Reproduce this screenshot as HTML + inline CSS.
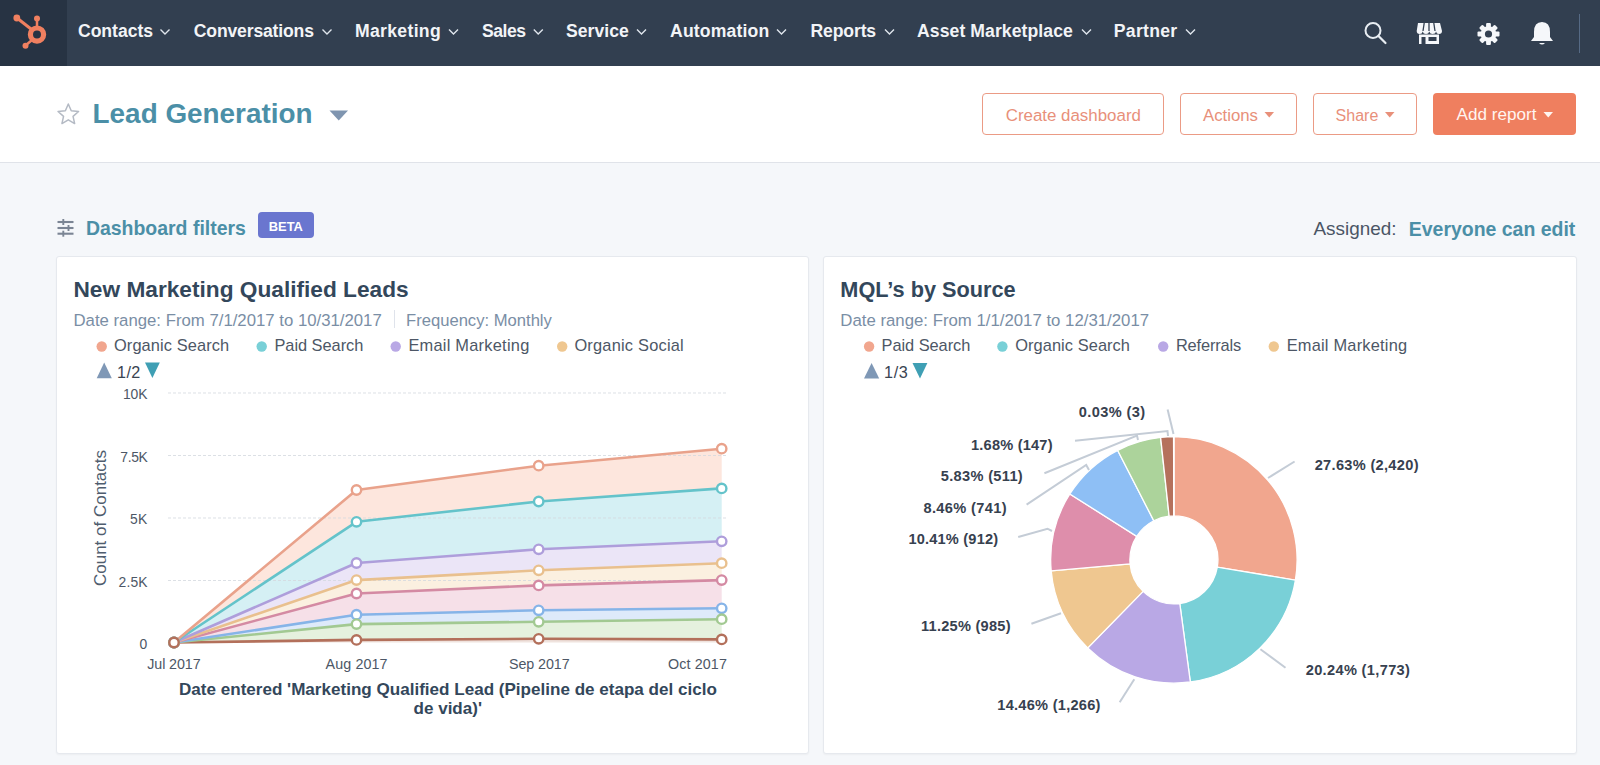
<!DOCTYPE html>
<html><head><meta charset="utf-8">
<style>
html,body{margin:0;padding:0;}
body{width:1600px;height:765px;overflow:hidden;position:relative;background:#f5f7fa;font-family:"Liberation Sans",sans-serif;}
.t{position:absolute;white-space:nowrap;line-height:normal;}
.abs{position:absolute;}
#nav{position:absolute;left:0;top:0;width:1600px;height:66px;background:#323f50;}
#logo{position:absolute;left:0;top:0;width:67px;height:66px;background:#273343;}
#hdr{position:absolute;left:0;top:66px;width:1600px;height:96px;background:#fff;border-bottom:1px solid #e0e3e9;}
.btn{position:absolute;top:93px;height:42px;border:1.5px solid #eb9b85;border-radius:4px;background:#fff;box-sizing:border-box;}
.card{position:absolute;top:256px;height:498px;background:#fff;border:1px solid #e6e9ee;border-radius:3px;box-sizing:border-box;box-shadow:0 1px 2px rgba(0,0,0,0.04);}
svg{position:absolute;left:0;top:0;}
</style></head><body>
<div id="nav"><div id="logo"></div></div>
<div id="hdr"></div>
<div class="btn" style="left:982px;width:182px;"></div>
<div class="btn" style="left:1180px;width:117px;"></div>
<div class="btn" style="left:1313px;width:104px;"></div>
<div class="abs" style="left:1433px;top:93px;width:143px;height:42px;background:#ef7f5f;border-radius:4px;"></div>
<div class="abs" style="left:258px;top:212px;width:56px;height:26px;background:#6a76cf;border-radius:4px;"></div>
<div class="card" style="left:56px;width:753px;"></div>
<div class="card" style="left:823px;width:754px;"></div>
<svg width="1600" height="765" viewBox="0 0 1600 765">
<!-- logo -->
<g fill="#f08060" stroke="#f08060">
<circle cx="37" cy="34.6" r="6.6" fill="none" stroke-width="5.2"/>
<line x1="37" y1="26" x2="37" y2="19" stroke-width="2.5"/>
<circle cx="37" cy="18.5" r="3" stroke="none"/>
<line x1="31" y1="29" x2="17" y2="18" stroke-width="3"/>
<circle cx="16.8" cy="18" r="3.4" stroke="none"/>
<line x1="32" y1="40" x2="25.5" y2="45.5" stroke-width="2.5"/>
<circle cx="25.5" cy="45.7" r="3" stroke="none"/>
</g>
<path d="M160.5 29.5 L165.0 34 L169.5 29.5" fill="none" stroke="#dfe5ec" stroke-width="1.4"/><path d="M322.5 29.5 L327.0 34 L331.5 29.5" fill="none" stroke="#dfe5ec" stroke-width="1.4"/><path d="M449.0 29.5 L453.5 34 L458.0 29.5" fill="none" stroke="#dfe5ec" stroke-width="1.4"/><path d="M533.8 29.5 L538.2 34 L542.8 29.5" fill="none" stroke="#dfe5ec" stroke-width="1.4"/><path d="M637.0 29.5 L641.5 34 L646.0 29.5" fill="none" stroke="#dfe5ec" stroke-width="1.4"/><path d="M777.0 29.5 L781.5 34 L786.0 29.5" fill="none" stroke="#dfe5ec" stroke-width="1.4"/><path d="M885.0 29.5 L889.5 34 L894.0 29.5" fill="none" stroke="#dfe5ec" stroke-width="1.4"/><path d="M1082.0 29.5 L1086.5 34 L1091.0 29.5" fill="none" stroke="#dfe5ec" stroke-width="1.4"/><path d="M1186.0 29.5 L1190.5 34 L1195.0 29.5" fill="none" stroke="#dfe5ec" stroke-width="1.4"/>
<!-- search -->
<circle cx="1373" cy="30.5" r="7.5" fill="none" stroke="#e8edf2" stroke-width="2"/>
<line x1="1378.5" y1="36" x2="1385.5" y2="43" stroke="#e8edf2" stroke-width="2.2" stroke-linecap="round"/>
<!-- store -->
<g fill="#f5f7fa">
<path d="M1418 23 h22 l2 8 q0 3 -3 3 q-2.5 0 -3 -2.5 q-0.5 2.5 -3.5 2.5 q-2.5 0 -3.2 -2.5 q-0.7 2.5 -3.3 2.5 q-2.8 0 -3.3 -2.5 q-0.5 2.5 -3 2.5 q-3 0 -3 -3 z"/>
<rect x="1419" y="34.5" width="20" height="9.5"/>
</g>
<g stroke="#323f50" stroke-width="1.3"><line x1="1424.2" y1="23" x2="1423" y2="31"/><line x1="1429" y1="23" x2="1429" y2="31"/><line x1="1433.8" y1="23" x2="1435" y2="31"/></g>
<rect x="1421.5" y="37" width="4" height="7" fill="#323f50"/>
<rect x="1428.5" y="37" width="8" height="4" fill="#323f50"/>
<!-- gear -->
<g transform="translate(1488.5 34)">
<circle r="7.8" fill="#f5f7fa"/>
<g fill="#f5f7fa">
<rect x="-2.4" y="-11" width="4.8" height="22" rx="1"/>
<rect x="-2.4" y="-11" width="4.8" height="22" rx="1" transform="rotate(45)"/>
<rect x="-2.4" y="-11" width="4.8" height="22" rx="1" transform="rotate(90)"/>
<rect x="-2.4" y="-11" width="4.8" height="22" rx="1" transform="rotate(135)"/>
</g>
<circle r="3.6" fill="#323f50"/>
</g>
<!-- bell -->
<path d="M1542 22 q-8 0 -8 10 v5 l-3 4 h22 l-3 -4 v-5 q0 -10 -8 -10 z" fill="#f5f7fa"/>
<path d="M1539 43 q3 3 6 0 z" fill="#f5f7fa"/>
<line x1="1579.5" y1="14" x2="1579.5" y2="53" stroke="#566a85" stroke-width="1"/>
<!-- star -->
<path d="M68.30 104.00 L71.24 110.75 L78.57 111.46 L73.06 116.35 L74.65 123.54 L68.30 119.80 L61.95 123.54 L63.54 116.35 L58.03 111.46 L65.36 110.75 Z" fill="none" stroke="#b4bac4" stroke-width="1.5" stroke-linejoin="round"/>
<!-- title caret -->
<path d="M329.5 110.5 L348 110.5 L338.75 120.5 Z" fill="#7f95b0"/>
<!-- btn carets -->
<path d="M1264.5 112 L1274 112 L1269.25 117.5 Z" fill="#e8907a"/>
<path d="M1385 112 L1394.5 112 L1389.75 117.5 Z" fill="#e8907a"/>
<path d="M1543.5 112 L1553 112 L1548.25 117.5 Z" fill="#fff5f0"/>
<!-- filter icon -->
<g stroke="#7b8594" stroke-width="2.1">
<line x1="57.5" y1="222" x2="73.5" y2="222"/><line x1="57.5" y1="228" x2="73.5" y2="228"/><line x1="57.5" y1="233.7" x2="73.5" y2="233.7"/>
</g>
<g stroke="#7b8594" stroke-width="1.9">
<line x1="63.3" y1="219" x2="63.3" y2="225"/><line x1="68.5" y1="225" x2="68.5" y2="231"/><line x1="63.3" y1="230.7" x2="63.3" y2="236.7"/>
</g>
<!-- separator -->
<line x1="394.5" y1="310" x2="394.5" y2="328" stroke="#dfe3eb" stroke-width="1"/>
<!-- legend dots left -->
<circle cx="101.7" cy="346.5" r="5.2" fill="#f1a68e"/>
<circle cx="261.7" cy="346.5" r="5.2" fill="#79d0d7"/>
<circle cx="395.7" cy="346.5" r="5.2" fill="#b9a8e5"/>
<circle cx="562.2" cy="346.5" r="5.2" fill="#efc790"/>
<path d="M96.7 378.2 L111.8 378.2 L104.2 362.5 Z" fill="#7f98b6"/>
<path d="M145 362.5 L159.8 362.5 L152.4 378 Z" fill="#3f9fb4"/>
<!-- legend dots right -->
<circle cx="869.1" cy="346.5" r="5.2" fill="#f1a68e"/>
<circle cx="1002.4" cy="346.5" r="5.2" fill="#79d0d7"/>
<circle cx="1163.2" cy="346.5" r="5.2" fill="#b9a8e5"/>
<circle cx="1273.8" cy="346.5" r="5.2" fill="#efc790"/>
<path d="M864 378.6 L879.2 378.6 L871.6 363 Z" fill="#7f98b6"/>
<path d="M912.5 363 L927.4 363 L920 378.4 Z" fill="#3f9fb4"/>
<polygon points="174,642.5 356.5,490 538.7,465.7 721.7,448.7 721.7,488.4 538.7,501.5 356.5,521.8 174,642.5" fill="#fde6dd"/>
<polygon points="174,642.5 356.5,521.8 538.7,501.5 721.7,488.4 721.7,541.3 538.7,549.3 356.5,563 174,642.5" fill="#d5f0f4"/>
<polygon points="174,642.5 356.5,563 538.7,549.3 721.7,541.3 721.7,563.2 538.7,570.3 356.5,580.1 174,642.5" fill="#ebe5f7"/>
<polygon points="174,642.5 356.5,580.1 538.7,570.3 721.7,563.2 721.7,580.1 538.7,585.4 356.5,593.5 174,642.5" fill="#fbf0e0"/>
<polygon points="174,642.5 356.5,593.5 538.7,585.4 721.7,580.1 721.7,608.3 538.7,610.3 356.5,614.7 174,642.5" fill="#f6e0e8"/>
<polygon points="174,642.5 356.5,614.7 538.7,610.3 721.7,608.3 721.7,619.2 538.7,621.8 356.5,624.1 174,642.5" fill="#deeafa"/>
<polygon points="174,642.5 356.5,624.1 538.7,621.8 721.7,619.2 721.7,639.4 538.7,638.8 356.5,639.9 174,642.5" fill="#e5f1de"/>
<polygon points="174,642.5 356.5,639.9 538.7,638.8 721.7,639.4 721.7,642.5 538.7,642.5 356.5,642.5 174,642.5" fill="#efe3de"/>
<line x1="168" y1="393" x2="727" y2="393" stroke="#d3d8df" stroke-opacity="0.8" stroke-width="1" stroke-dasharray="3 2"/>
<line x1="168" y1="455.5" x2="727" y2="455.5" stroke="#d3d8df" stroke-opacity="0.8" stroke-width="1" stroke-dasharray="3 2"/>
<line x1="168" y1="518" x2="727" y2="518" stroke="#d3d8df" stroke-opacity="0.8" stroke-width="1" stroke-dasharray="3 2"/>
<line x1="168" y1="580.5" x2="727" y2="580.5" stroke="#d3d8df" stroke-opacity="0.8" stroke-width="1" stroke-dasharray="3 2"/>
<polyline points="174,642.5 356.5,639.9 538.7,638.8 721.7,639.4" fill="none" stroke="#b3705b" stroke-width="2.6" stroke-linejoin="round"/>
<polyline points="174,642.5 356.5,624.1 538.7,621.8 721.7,619.2" fill="none" stroke="#a2c992" stroke-width="2.6" stroke-linejoin="round"/>
<polyline points="174,642.5 356.5,614.7 538.7,610.3 721.7,608.3" fill="none" stroke="#86b4e8" stroke-width="2.6" stroke-linejoin="round"/>
<polyline points="174,642.5 356.5,593.5 538.7,585.4 721.7,580.1" fill="none" stroke="#d48aa3" stroke-width="2.6" stroke-linejoin="round"/>
<polyline points="174,642.5 356.5,580.1 538.7,570.3 721.7,563.2" fill="none" stroke="#e9c08e" stroke-width="2.6" stroke-linejoin="round"/>
<polyline points="174,642.5 356.5,563 538.7,549.3 721.7,541.3" fill="none" stroke="#ae9edb" stroke-width="2.6" stroke-linejoin="round"/>
<polyline points="174,642.5 356.5,521.8 538.7,501.5 721.7,488.4" fill="none" stroke="#64c3ca" stroke-width="2.6" stroke-linejoin="round"/>
<polyline points="174,642.5 356.5,490 538.7,465.7 721.7,448.7" fill="none" stroke="#e9a28b" stroke-width="2.6" stroke-linejoin="round"/>
<circle cx="174" cy="642.5" r="4.7" fill="#fff" stroke="#e9a28b" stroke-width="2.4"/>
<circle cx="356.5" cy="490" r="4.7" fill="#fff" stroke="#e9a28b" stroke-width="2.4"/>
<circle cx="538.7" cy="465.7" r="4.7" fill="#fff" stroke="#e9a28b" stroke-width="2.4"/>
<circle cx="721.7" cy="448.7" r="4.7" fill="#fff" stroke="#e9a28b" stroke-width="2.4"/>
<circle cx="174" cy="642.5" r="4.7" fill="#fff" stroke="#64c3ca" stroke-width="2.4"/>
<circle cx="356.5" cy="521.8" r="4.7" fill="#fff" stroke="#64c3ca" stroke-width="2.4"/>
<circle cx="538.7" cy="501.5" r="4.7" fill="#fff" stroke="#64c3ca" stroke-width="2.4"/>
<circle cx="721.7" cy="488.4" r="4.7" fill="#fff" stroke="#64c3ca" stroke-width="2.4"/>
<circle cx="174" cy="642.5" r="4.7" fill="#fff" stroke="#ae9edb" stroke-width="2.4"/>
<circle cx="356.5" cy="563" r="4.7" fill="#fff" stroke="#ae9edb" stroke-width="2.4"/>
<circle cx="538.7" cy="549.3" r="4.7" fill="#fff" stroke="#ae9edb" stroke-width="2.4"/>
<circle cx="721.7" cy="541.3" r="4.7" fill="#fff" stroke="#ae9edb" stroke-width="2.4"/>
<circle cx="174" cy="642.5" r="4.7" fill="#fff" stroke="#e9c08e" stroke-width="2.4"/>
<circle cx="356.5" cy="580.1" r="4.7" fill="#fff" stroke="#e9c08e" stroke-width="2.4"/>
<circle cx="538.7" cy="570.3" r="4.7" fill="#fff" stroke="#e9c08e" stroke-width="2.4"/>
<circle cx="721.7" cy="563.2" r="4.7" fill="#fff" stroke="#e9c08e" stroke-width="2.4"/>
<circle cx="174" cy="642.5" r="4.7" fill="#fff" stroke="#d48aa3" stroke-width="2.4"/>
<circle cx="356.5" cy="593.5" r="4.7" fill="#fff" stroke="#d48aa3" stroke-width="2.4"/>
<circle cx="538.7" cy="585.4" r="4.7" fill="#fff" stroke="#d48aa3" stroke-width="2.4"/>
<circle cx="721.7" cy="580.1" r="4.7" fill="#fff" stroke="#d48aa3" stroke-width="2.4"/>
<circle cx="174" cy="642.5" r="4.7" fill="#fff" stroke="#86b4e8" stroke-width="2.4"/>
<circle cx="356.5" cy="614.7" r="4.7" fill="#fff" stroke="#86b4e8" stroke-width="2.4"/>
<circle cx="538.7" cy="610.3" r="4.7" fill="#fff" stroke="#86b4e8" stroke-width="2.4"/>
<circle cx="721.7" cy="608.3" r="4.7" fill="#fff" stroke="#86b4e8" stroke-width="2.4"/>
<circle cx="174" cy="642.5" r="4.7" fill="#fff" stroke="#a2c992" stroke-width="2.4"/>
<circle cx="356.5" cy="624.1" r="4.7" fill="#fff" stroke="#a2c992" stroke-width="2.4"/>
<circle cx="538.7" cy="621.8" r="4.7" fill="#fff" stroke="#a2c992" stroke-width="2.4"/>
<circle cx="721.7" cy="619.2" r="4.7" fill="#fff" stroke="#a2c992" stroke-width="2.4"/>
<circle cx="174" cy="642.5" r="4.7" fill="#fff" stroke="#b3705b" stroke-width="2.4"/>
<circle cx="356.5" cy="639.9" r="4.7" fill="#fff" stroke="#b3705b" stroke-width="2.4"/>
<circle cx="538.7" cy="638.8" r="4.7" fill="#fff" stroke="#b3705b" stroke-width="2.4"/>
<circle cx="721.7" cy="639.4" r="4.7" fill="#fff" stroke="#b3705b" stroke-width="2.4"/>
<path d="M1173.90 436.70 A123.2 123.2 0 0 1 1295.42 580.17 L1217.30 567.14 A44 44 0 0 0 1173.90 515.90 Z" fill="#f1a68e" stroke="#fff" stroke-width="1.3"/>
<path d="M1295.42 580.17 A123.2 123.2 0 0 1 1190.34 682.00 L1179.77 603.51 A44 44 0 0 0 1217.30 567.14 Z" fill="#79d0d7" stroke="#fff" stroke-width="1.3"/>
<path d="M1190.34 682.00 A123.2 123.2 0 0 1 1087.72 647.94 L1143.12 591.34 A44 44 0 0 0 1179.77 603.51 Z" fill="#b9a8e5" stroke="#fff" stroke-width="1.3"/>
<path d="M1087.72 647.94 A123.2 123.2 0 0 1 1051.19 570.88 L1130.08 563.82 A44 44 0 0 0 1143.12 591.34 Z" fill="#efc790" stroke="#fff" stroke-width="1.3"/>
<path d="M1051.19 570.88 A123.2 123.2 0 0 1 1069.84 493.95 L1136.73 536.35 A44 44 0 0 0 1130.08 563.82 Z" fill="#de8eab" stroke="#fff" stroke-width="1.3"/>
<path d="M1069.84 493.95 A123.2 123.2 0 0 1 1117.62 450.30 L1153.80 520.76 A44 44 0 0 0 1136.73 536.35 Z" fill="#8ebff5" stroke="#fff" stroke-width="1.3"/>
<path d="M1117.62 450.30 A123.2 123.2 0 0 1 1160.61 437.42 L1169.15 516.16 A44 44 0 0 0 1153.80 520.76 Z" fill="#acd39b" stroke="#fff" stroke-width="1.3"/>
<path d="M1160.61 437.42 A123.2 123.2 0 0 1 1173.59 436.70 L1173.79 515.90 A44 44 0 0 0 1169.15 516.16 Z" fill="#b5715c" stroke="#fff" stroke-width="1.3"/>
<path d="M1173.59 436.70 A123.2 123.2 0 0 1 1173.82 436.70 L1173.87 515.90 A44 44 0 0 0 1173.79 515.90 Z" fill="#f1a68e" stroke="#fff" stroke-width="1.3"/>
<polyline points="1167.6,409.4 1173.5,434" fill="none" stroke="#c4ccd6" stroke-width="2"/>
<polyline points="1075,440.8 1167.5,431 1168,436" fill="none" stroke="#c4ccd6" stroke-width="2"/>
<polyline points="1044.4,473.2 1137,435.6 1138,440" fill="none" stroke="#c4ccd6" stroke-width="2"/>
<polyline points="1026.6,504.6 1086.2,464.9 1089,470" fill="none" stroke="#c4ccd6" stroke-width="2"/>
<polyline points="1018.2,537 1047.5,528.7 1052,531" fill="none" stroke="#c4ccd6" stroke-width="2"/>
<polyline points="1031.4,623.8 1061,613.3" fill="none" stroke="#c4ccd6" stroke-width="2"/>
<polyline points="1119.7,702.3 1134.3,679.2" fill="none" stroke="#c4ccd6" stroke-width="2"/>
<polyline points="1268,478 1294.6,461.5" fill="none" stroke="#c4ccd6" stroke-width="2"/>
<polyline points="1260.4,649.2 1285.5,667.8" fill="none" stroke="#c4ccd6" stroke-width="2"/>
</svg>
<div class="t" style="left:92px;top:518px;transform:translate(-50%,-50%) rotate(-90deg);font-size:17px;color:#4f5d6e;left:101px;">Count of Contacts</div>
<div class="t" style="left:78.0px;top:21.1px;font-size:17.60px;letter-spacing:-0.04px;font-weight:700;color:#f2f4f7;">Contacts</div>
<div class="t" style="left:193.8px;top:21.1px;font-size:17.60px;letter-spacing:-0.17px;font-weight:700;color:#f2f4f7;">Conversations</div>
<div class="t" style="left:355.0px;top:21.1px;font-size:17.60px;letter-spacing:0.32px;font-weight:700;color:#f2f4f7;">Marketing</div>
<div class="t" style="left:482.0px;top:21.1px;font-size:17.60px;letter-spacing:-0.50px;font-weight:700;color:#f2f4f7;">Sales</div>
<div class="t" style="left:566.0px;top:21.1px;font-size:17.60px;letter-spacing:0.05px;font-weight:700;color:#f2f4f7;">Service</div>
<div class="t" style="left:670.0px;top:21.1px;font-size:17.60px;letter-spacing:0.17px;font-weight:700;color:#f2f4f7;">Automation</div>
<div class="t" style="left:810.5px;top:21.1px;font-size:17.60px;letter-spacing:-0.14px;font-weight:700;color:#f2f4f7;">Reports</div>
<div class="t" style="left:917.0px;top:21.1px;font-size:17.60px;letter-spacing:0.08px;font-weight:700;color:#f2f4f7;">Asset Marketplace</div>
<div class="t" style="left:1113.8px;top:21.1px;font-size:17.60px;letter-spacing:0.30px;font-weight:700;color:#f2f4f7;">Partner</div>
<div class="t" style="left:92.6px;top:98.2px;font-size:27.88px;letter-spacing:0.00px;font-weight:700;color:#4b8fa7;">Lead Generation</div>
<div class="t" style="left:1005.7px;top:105.5px;font-size:16.90px;letter-spacing:0.00px;font-weight:400;color:#e8907a;">Create dashboard</div>
<div class="t" style="left:1203.0px;top:105.6px;font-size:16.77px;letter-spacing:0.00px;font-weight:400;color:#e8907a;">Actions</div>
<div class="t" style="left:1335.6px;top:106.3px;font-size:16.04px;letter-spacing:-0.00px;font-weight:400;color:#e8907a;">Share</div>
<div class="t" style="left:1456.6px;top:105.3px;font-size:17.13px;letter-spacing:-0.00px;font-weight:400;color:#fff5f0;">Add report</div>
<div class="t" style="left:85.9px;top:216.8px;font-size:19.47px;letter-spacing:-0.00px;font-weight:700;color:#4b8fa7;">Dashboard filters</div>
<div class="t" style="left:268.8px;top:218.5px;font-size:12.88px;letter-spacing:0.00px;font-weight:700;color:#ffffff;">BETA</div>
<div class="t" style="left:1313.5px;top:218.0px;font-size:18.92px;letter-spacing:0.00px;font-weight:400;color:#4a5565;">Assigned:</div>
<div class="t" style="left:1408.8px;top:217.5px;font-size:19.46px;letter-spacing:0.00px;font-weight:700;color:#4b8fa7;">Everyone can edit</div>
<div class="t" style="left:73.5px;top:275.5px;font-size:22.68px;letter-spacing:0.00px;font-weight:700;color:#33475b;">New Marketing Qualified Leads</div>
<div class="t" style="left:73.5px;top:310.7px;font-size:16.75px;letter-spacing:0.00px;font-weight:400;color:#7a8ea5;">Date range: From 7/1/2017 to 10/31/2017</div>
<div class="t" style="left:406.0px;top:310.8px;font-size:16.63px;letter-spacing:-0.00px;font-weight:400;color:#7a8ea5;">Frequency: Monthly</div>
<div class="t" style="left:114.0px;top:336.3px;font-size:16.40px;letter-spacing:0.10px;font-weight:400;color:#4d5766;">Organic Search</div>
<div class="t" style="left:274.4px;top:336.3px;font-size:16.40px;letter-spacing:-0.03px;font-weight:400;color:#4d5766;">Paid Search</div>
<div class="t" style="left:408.4px;top:336.3px;font-size:16.40px;letter-spacing:0.24px;font-weight:400;color:#4d5766;">Email Marketing</div>
<div class="t" style="left:574.4px;top:336.3px;font-size:16.40px;letter-spacing:0.21px;font-weight:400;color:#4d5766;">Organic Social</div>
<div class="t" style="left:116.9px;top:362.7px;font-size:16.20px;letter-spacing:0.49px;font-weight:400;color:#3a4452;">1/2</div>
<div class="t" style="left:122.9px;top:386.2px;font-size:13.90px;letter-spacing:-0.04px;font-weight:400;color:#4d5766;">10K</div>
<div class="t" style="left:120.3px;top:448.7px;font-size:13.90px;letter-spacing:-0.35px;font-weight:400;color:#4d5766;">7.5K</div>
<div class="t" style="left:130.0px;top:511.2px;font-size:13.90px;letter-spacing:0.35px;font-weight:400;color:#4d5766;">5K</div>
<div class="t" style="left:118.5px;top:573.7px;font-size:13.90px;letter-spacing:0.15px;font-weight:400;color:#4d5766;">2.5K</div>
<div class="t" style="left:139.4px;top:636.2px;font-size:13.90px;letter-spacing:0.57px;font-weight:400;color:#4d5766;">0</div>
<div class="t" style="left:147.2px;top:655.9px;font-size:14.30px;letter-spacing:-0.08px;font-weight:400;color:#4d5766;">Jul 2017</div>
<div class="t" style="left:325.6px;top:655.9px;font-size:14.30px;letter-spacing:0.10px;font-weight:400;color:#4d5766;">Aug 2017</div>
<div class="t" style="left:509.0px;top:655.9px;font-size:14.30px;letter-spacing:-0.08px;font-weight:400;color:#4d5766;">Sep 2017</div>
<div class="t" style="left:668.0px;top:655.9px;font-size:14.30px;letter-spacing:0.12px;font-weight:400;color:#4d5766;">Oct 2017</div>
<div class="t" style="left:179.0px;top:680.0px;font-size:17.07px;letter-spacing:0.00px;font-weight:700;color:#33475b;">Date entered 'Marketing Qualified Lead (Pipeline de etapa del ciclo</div>
<div class="t" style="left:413.6px;top:699.4px;font-size:17.03px;letter-spacing:0.00px;font-weight:700;color:#33475b;">de vida)'</div>
<div class="t" style="left:840.3px;top:277.0px;font-size:21.71px;letter-spacing:0.00px;font-weight:700;color:#33475b;">MQL’s by Source</div>
<div class="t" style="left:840.3px;top:310.7px;font-size:16.79px;letter-spacing:0.00px;font-weight:400;color:#7a8ea5;">Date range: From 1/1/2017 to 12/31/2017</div>
<div class="t" style="left:881.6px;top:336.3px;font-size:16.40px;letter-spacing:-0.06px;font-weight:400;color:#4d5766;">Paid Search</div>
<div class="t" style="left:1015.2px;top:336.3px;font-size:16.40px;letter-spacing:0.07px;font-weight:400;color:#4d5766;">Organic Search</div>
<div class="t" style="left:1175.9px;top:336.3px;font-size:16.40px;letter-spacing:-0.14px;font-weight:400;color:#4d5766;">Referrals</div>
<div class="t" style="left:1286.7px;top:336.3px;font-size:16.40px;letter-spacing:0.21px;font-weight:400;color:#4d5766;">Email Marketing</div>
<div class="t" style="left:884.0px;top:363.1px;font-size:16.20px;letter-spacing:0.63px;font-weight:400;color:#3a4452;">1/3</div>
<div class="t" style="left:1078.7px;top:404.4px;font-size:14.60px;letter-spacing:0.40px;font-weight:700;color:#37414f;">0.03% (3)</div>
<div class="t" style="left:971.0px;top:436.7px;font-size:14.60px;letter-spacing:0.20px;font-weight:700;color:#37414f;">1.68% (147)</div>
<div class="t" style="left:940.8px;top:467.6px;font-size:14.60px;letter-spacing:0.32px;font-weight:700;color:#37414f;">5.83% (511)</div>
<div class="t" style="left:923.4px;top:500.0px;font-size:14.60px;letter-spacing:0.37px;font-weight:700;color:#37414f;">8.46% (741)</div>
<div class="t" style="left:908.4px;top:531.4px;font-size:14.60px;letter-spacing:0.19px;font-weight:700;color:#37414f;">10.41% (912)</div>
<div class="t" style="left:921.0px;top:618.2px;font-size:14.60px;letter-spacing:0.25px;font-weight:700;color:#37414f;">11.25% (985)</div>
<div class="t" style="left:997.3px;top:697.0px;font-size:14.60px;letter-spacing:0.26px;font-weight:700;color:#37414f;">14.46% (1,266)</div>
<div class="t" style="left:1314.7px;top:456.7px;font-size:14.60px;letter-spacing:0.31px;font-weight:700;color:#37414f;">27.63% (2,420)</div>
<div class="t" style="left:1305.7px;top:662.0px;font-size:14.60px;letter-spacing:0.34px;font-weight:700;color:#37414f;">20.24% (1,773)</div>
</body></html>
